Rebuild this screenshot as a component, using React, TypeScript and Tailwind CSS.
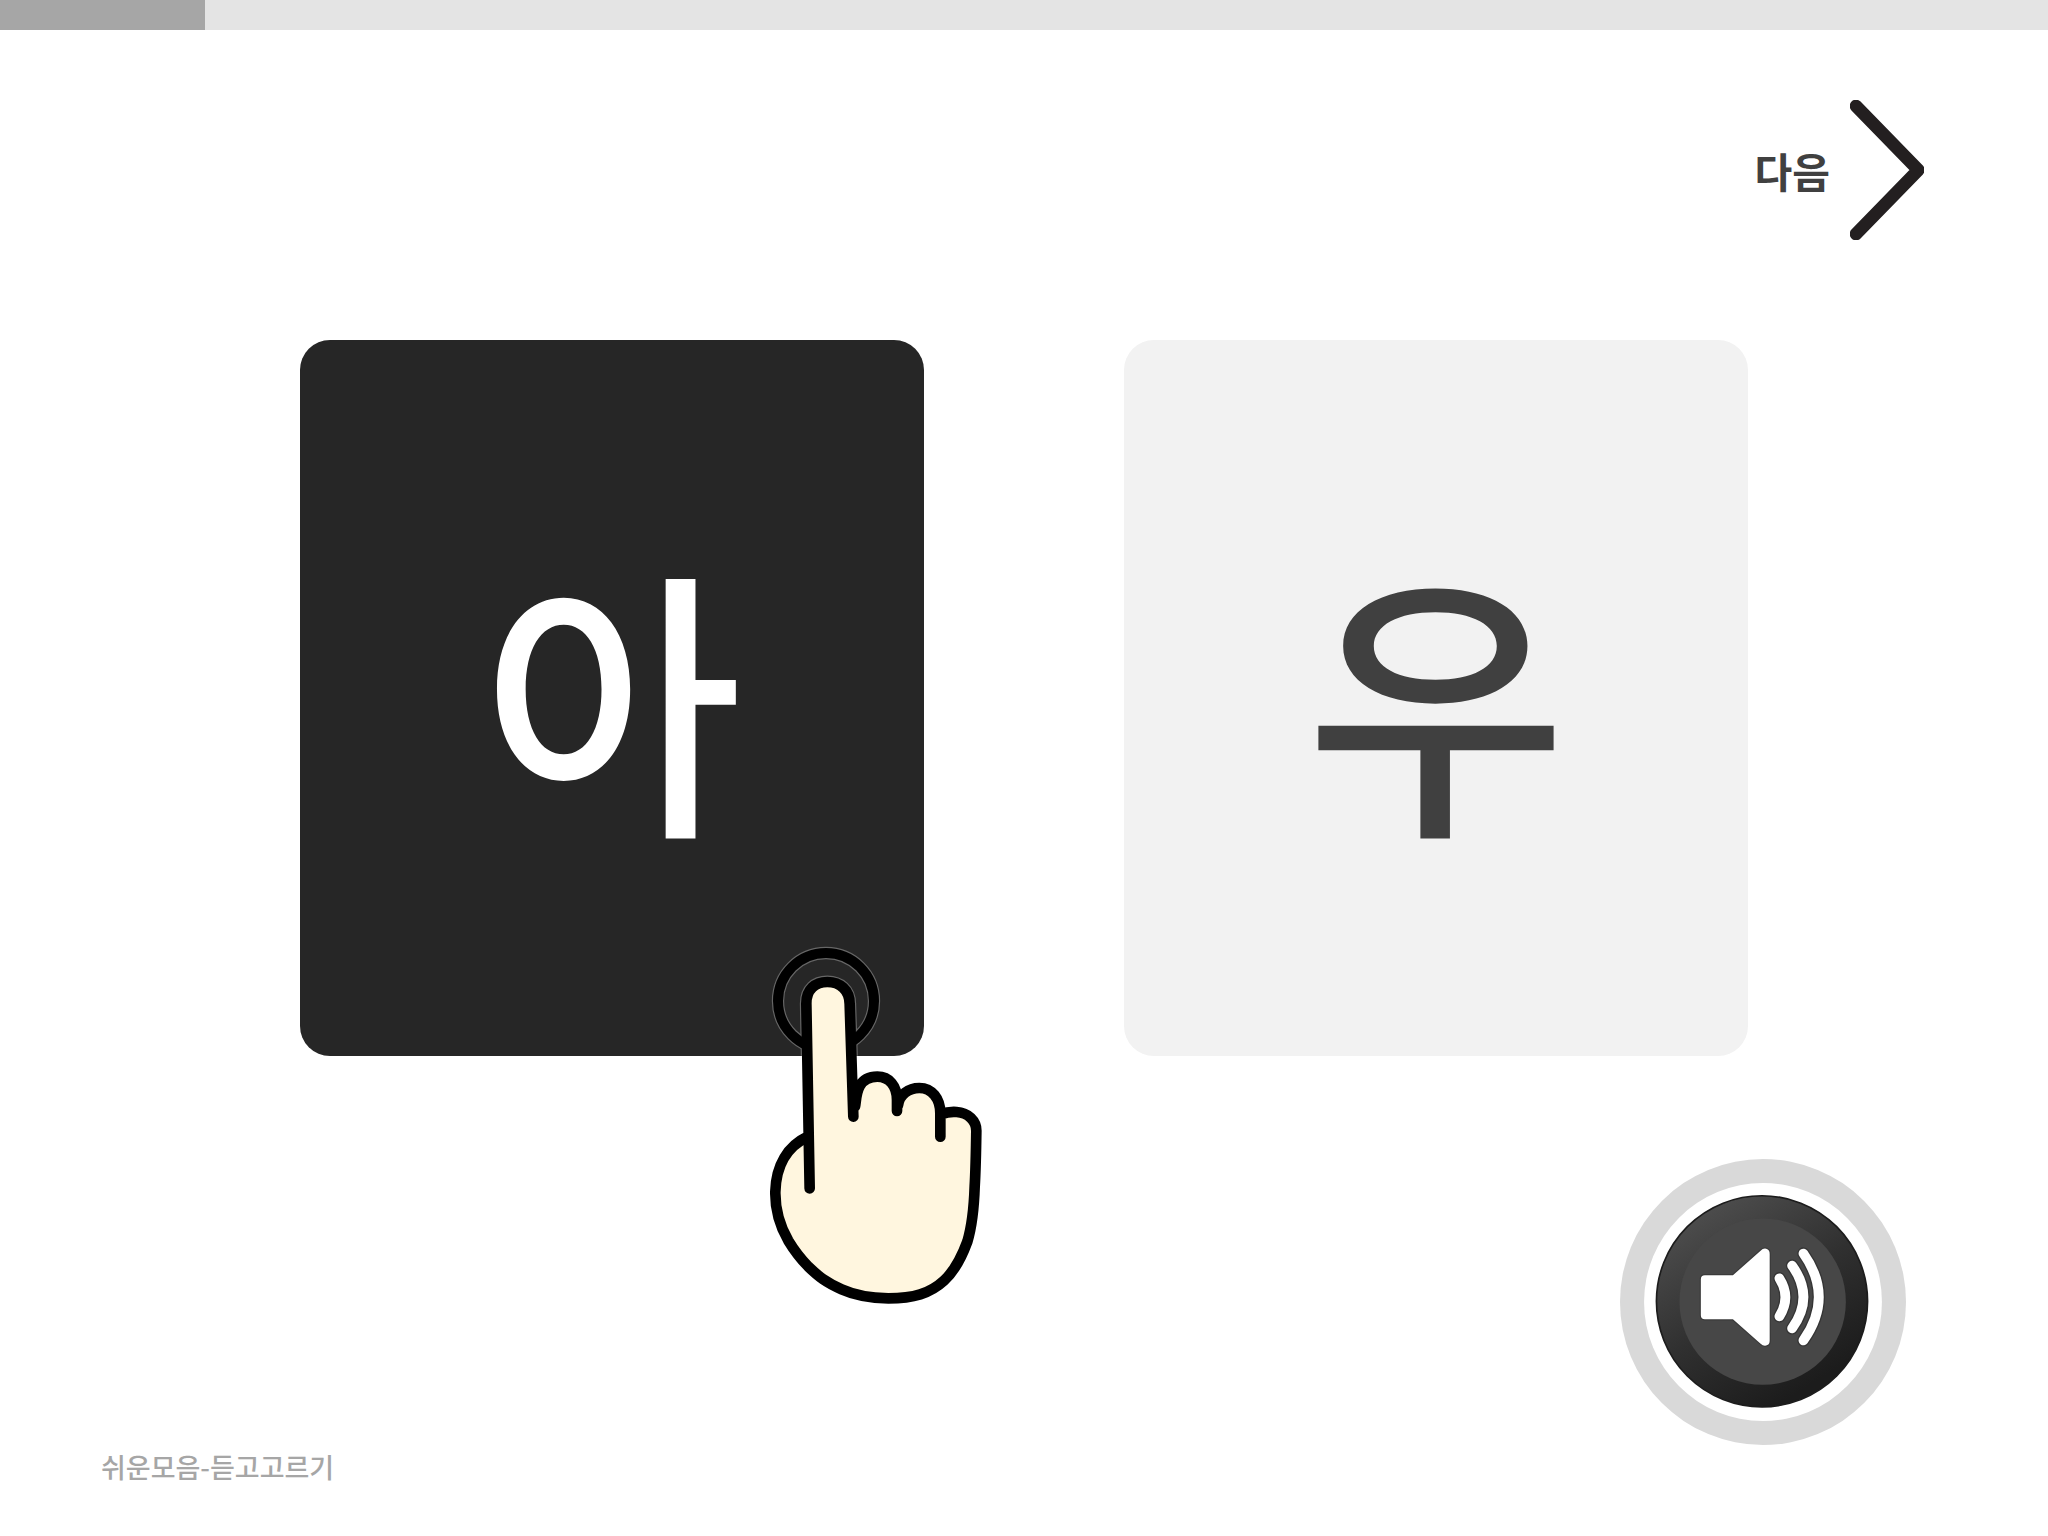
import { useState } from 'react';

const PROGRESS = 10;
const CHOICES = ['아', '우'];

function NextArrow() {
  return (
    <svg viewBox="0 0 222 420" className="h-[140px] w-[74px]" aria-hidden="true">
      <path
        d="M18 18 L205 210 L18 402"
        fill="none"
        stroke="#231f20"
        strokeWidth="38"
        strokeLinecap="round"
        strokeLinejoin="round"
      />
    </svg>
  );
}

function PointingHand() {
  const palm =
    'C684 578 709 602 709 632 C708 700 707 750 704 800 C702 860 694 925 682 965 C662 1020 638 1058 612 1082 C570 1121 520 1135 445 1135 C385 1134 345 1126 305 1108 C258 1087 236 1070 205 1040 C178 1012 162 990 145 962 C118 915 105 868 106 815 C108 735 144 678 203 650';
  const outline =
    'M209 805 L199 250 C199 208 226 186 262 186 C300 186 329 210 329 252 L340 590 M345 560 C350 545 342 470 412 470 C448 470 471 498 471 540 V573 M474 556 C478 524 506 504 538 504 C576 504 601 536 601 580 V650 M606 582 C618 577 634 575 650 576 ' +
    palm;
  const skin =
    'M199 250 C199 208 226 186 262 186 C300 186 329 210 329 252 L340 580 C350 545 342 470 412 470 C448 470 471 498 471 540 L474 556 C478 524 506 504 538 504 C576 504 601 536 601 580 C618 577 634 575 650 576 ' +
    palm +
    ' Z';
  return (
    <svg
      viewBox="0 0 840 1200"
      className="pointer-events-none absolute -right-24 -bottom-[264px] h-[400px] w-[280px]"
      aria-hidden="true"
    >
      <defs>
        <clipPath id="card-area">
          <rect width="552" height="407" />
        </clipPath>
      </defs>
      <g clipPath="url(#card-area)" fill="none" stroke="#666">
        <circle cx="258" cy="243" r="144" strokeWidth="37" />
        <path d={outline} strokeWidth="39" />
      </g>
      <circle cx="258" cy="243" r="144" fill="none" stroke="#000" strokeWidth="30" />
      <path d={skin} fill="#fff6df" />
      <path
        d={outline}
        fill="none"
        stroke="#000"
        strokeWidth="32"
        strokeLinecap="round"
        strokeLinejoin="round"
      />
    </svg>
  );
}

function SpeakerIcon() {
  return (
    <svg viewBox="0 0 856 856" className="size-[286px]" aria-hidden="true">
      <defs>
        <linearGradient id="bezel" x1="0.3" y1="0.05" x2="0.8" y2="0.85">
          <stop offset="0" stopColor="#4b4b4b" />
          <stop offset="0.5" stopColor="#303030" />
          <stop offset="1" stopColor="#1c1c1c" />
        </linearGradient>
      </defs>
      <circle cx="428" cy="428" r="428" fill="#d9d9d9" />
      <circle cx="428" cy="428" r="356" fill="#fff" />
      <circle cx="425" cy="426" r="316" fill="url(#bezel)" stroke="#1c1c1c" strokeWidth="5" />
      <circle cx="427" cy="427" r="249" fill="#474747" />
      <g fill="none" strokeLinecap="round" strokeLinejoin="round">
        <g stroke="#353535" strokeWidth="37">
          <path d="M477 357 Q513 413 477 471" />
          <path d="M515 319 Q583 413 515 507" />
          <path d="M549 283 Q641 413 549 543" />
        </g>
        <g stroke="#fff" strokeWidth="29">
          <path d="M477 357 Q513 413 477 471" />
          <path d="M515 319 Q583 413 515 507" />
          <path d="M549 283 Q641 413 549 543" />
        </g>
      </g>
      <path
        d="M254 348 H338 L420 275 Q431 264 441 270 Q448 273 448 284 V543 Q448 554 441 557 Q431 563 420 552 L338 480 H254 Q242 480 242 468 V360 Q242 348 254 348 Z"
        fill="#fff"
        stroke="#3a3a3a"
        strokeWidth="7"
        paintOrder="stroke"
      />
    </svg>
  );
}

export default function App() {
  const [selected, setSelected] = useState(0);

  return (
    <div className="flex min-h-screen flex-col bg-white font-['Noto_Sans_CJK_KR',sans-serif]">
      <div
        role="progressbar"
        aria-label="진행"
        aria-valuenow={PROGRESS}
        aria-valuemin={0}
        aria-valuemax={100}
        className="h-[30px] bg-[#e4e4e4]"
      >
        <div className="h-full bg-[#a6a6a6]" style={{ width: `${PROGRESS}%` }} />
      </div>

      <header className="flex justify-end pt-[70px] pr-[124px]">
        <button type="button" className="flex cursor-pointer items-center gap-5">
          <span className="text-[41px] leading-[48px] font-bold text-[#404040]">다음</span>
          <NextArrow />
        </button>
      </header>

      <main className="grid grid-cols-2 gap-[200px] px-[300px] pt-[100px]">
        {CHOICES.map((letter, i) => (
          <button
            key={letter}
            type="button"
            aria-pressed={selected === i}
            onClick={() => setSelected(i)}
            className={
              selected === i
                ? 'relative flex h-[716px] cursor-pointer items-center justify-center rounded-[30px] bg-[#262626] pb-3 text-[284px] leading-none font-medium text-white'
                : 'relative flex h-[716px] cursor-pointer items-center justify-center rounded-[30px] bg-[#f2f2f2] pb-3 text-[284px] leading-none font-medium text-[#404040]'
            }
          >
            {letter}
            {i === 0 && <PointingHand />}
          </button>
        ))}
      </main>

      <footer className="flex items-end justify-between pt-[103px] pr-[142px] pl-[101px]">
        <p className="pb-0.5 text-[27px] leading-9 font-medium text-[#a6a6a6]">쉬운모음-듣고고르기</p>
        <button type="button" aria-label="소리 듣기" className="mb-[42px] cursor-pointer rounded-full">
          <SpeakerIcon />
        </button>
      </footer>
    </div>
  );
}
